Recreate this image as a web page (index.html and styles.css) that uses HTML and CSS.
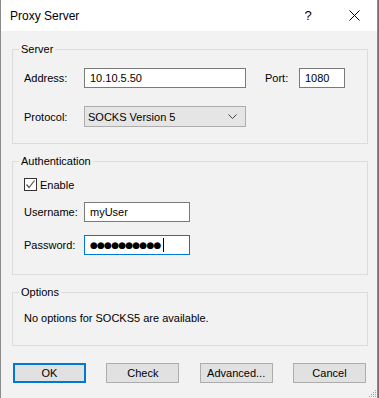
FILE: index.html
```html
<!DOCTYPE html>
<html lang="en">
<head>
    <meta charset="UTF-8">
    <title>Proxy Server</title>
    <link rel="stylesheet" href="styles.css">
</head>
<body>

    <div class="window">
        <div class="titlebar">
            <span class="title">Proxy Server</span>
            <span class="tb-btn tb-help">?</span>
            <span class="tb-btn tb-close">
                <svg width="11" height="11" viewBox="0 0 11 11"><path d="M0.5 0.5 L10.5 10.5 M10.5 0.5 L0.5 10.5" stroke="#000" stroke-width="1"/></svg>
            </span>
        </div>

        <div class="content">
            <fieldset class="group group-server">
                <legend>Server</legend>
                <div class="row">
                    <label class="lbl" for="address">Address:</label>
                    <input class="field field-address" id="address" value="10.10.5.50">
                    <label class="lbl-port" for="port">Port:</label>
                    <input class="field field-port" id="port" value="1080">
                </div>
                <div class="row row-protocol">
                    <label class="lbl">Protocol:</label>
                    <div class="select">
                        <span>SOCKS Version 5</span>
                        <svg width="9" height="5" viewBox="0 0 9 5"><path d="M0.5 0.5 L4.5 4.5 L8.5 0.5" fill="none" stroke="#444" stroke-width="1"/></svg>
                    </div>
                </div>
            </fieldset>

            <fieldset class="group group-auth">
                <legend>Authentication</legend>
                <div class="check-row">
                    <span class="checkbox">
                        <svg width="11" height="11" viewBox="0 0 11 11"><path d="M1.5 5.5 L4 8.5 L9.5 1.5" fill="none" stroke="#555" stroke-width="1.2"/></svg>
                    </span>
                    <span>Enable</span>
                </div>
                <div class="row row-user">
                    <label class="lbl" for="username">Username:</label>
                    <input class="field field-user" id="username" value="myUser">
                </div>
                <div class="row row-pass">
                    <label class="lbl">Password:</label>
                    <div class="field field-user field-focus"><span class="dots">●●●●●●●●●●</span><span class="caret"></span></div>
                </div>
            </fieldset>

            <fieldset class="group group-options">
                <legend>Options</legend>
                <p class="note">No options for SOCKS5 are available.</p>
            </fieldset>

            <div class="buttons">
                <button class="btn btn-default">OK</button>
                <button class="btn">Check</button>
                <button class="btn">Advanced...</button>
                <button class="btn">Cancel</button>
            </div>
        </div>

        <svg class="grip" width="9" height="9" viewBox="0 0 9 9">
            <rect x="7" y="1" width="1" height="1" fill="#a0a0a0"/>
            <rect x="5" y="3" width="1" height="1" fill="#a0a0a0"/>
            <rect x="7" y="3" width="1" height="1" fill="#a0a0a0"/>
            <rect x="3" y="5" width="1" height="1" fill="#a0a0a0"/>
            <rect x="5" y="5" width="1" height="1" fill="#a0a0a0"/>
            <rect x="7" y="5" width="1" height="1" fill="#a0a0a0"/>
            <rect x="1" y="7" width="1" height="1" fill="#a0a0a0"/>
            <rect x="3" y="7" width="1" height="1" fill="#a0a0a0"/>
            <rect x="5" y="7" width="1" height="1" fill="#a0a0a0"/>
            <rect x="7" y="7" width="1" height="1" fill="#a0a0a0"/>
        </svg>
    </div>

</body>
</html>
```

FILE: styles.css
```css
body {
    margin: 0;
    background: #6e6e6e;
    font-family: "Liberation Sans", Arial, sans-serif;
    font-size: 11px;
    color: #000;
}
.window {
    position: relative;
    width: 378px;
    height: 398px;
    box-sizing: border-box;
    border-left: 1px solid #8a8a8a;
    border-right: 1px solid #8a8a8a;
    background: #f2f2f2;
}
.titlebar {
    display: flex;
    align-items: center;
    height: 31px;
    background: #fff;
}
.title {
    flex: 1;
    padding-left: 9px;
    font-size: 12px;
}
.tb-btn {
    display: flex;
    align-items: center;
    justify-content: center;
    width: 46px;
    height: 31px;
}
.tb-help {
    font-size: 13px;
}
.content {
    padding: 0 0 0 11px;
}
.group {
    width: 356px;
    box-sizing: border-box;
    margin: 11px 0 0 0;
    padding: 0 11px;
    border: 1px solid #dcdcdc;
    min-width: 0;
}
.group legend {
    padding: 0 2px;
    margin-left: -5px;
    line-height: 13px;
}
.group-server {
    margin-top: 12px;
    padding-top: 12px;
    padding-bottom: 16px;
}
.group-auth {
    padding-top: 10px;
    padding-bottom: 19px;
}
.group-options {
    padding-top: 13px;
    padding-bottom: 20px;
}
.row {
    display: flex;
    align-items: center;
}
.row-protocol {
    margin-top: 18px;
}
.row-user {
    margin-top: 11px;
}
.row-pass {
    margin-top: 13px;
}
.lbl {
    width: 60px;
}
.lbl-port {
    width: 34px;
    margin-left: 19px;
}
.field {
    height: 20px;
    box-sizing: border-box;
    border: 1px solid #7a7a7a;
    background: #fff;
    padding: 0 5px;
    font-family: inherit;
    font-size: 11px;
    color: #000;
    outline: none;
}
.field-address {
    width: 162px;
}
.field-port {
    width: 46px;
}
.field-user {
    width: 106px;
}
.field-focus {
    display: flex;
    align-items: center;
    border-color: #0078d7;
}
.dots {
    font-family: "DejaVu Sans", sans-serif;
    font-size: 9px;
    letter-spacing: -0.8px;
}
.caret {
    width: 1px;
    height: 14px;
    margin-left: 2px;
    background: #000;
}
.select {
    display: flex;
    align-items: center;
    justify-content: space-between;
    width: 162px;
    height: 21px;
    box-sizing: border-box;
    padding: 0 8px 0 3px;
    border: 1px solid #adadad;
    background: #e5e5e5;
}
.check-row {
    display: flex;
    align-items: center;
    gap: 3px;
    height: 13px;
}
.checkbox {
    display: flex;
    align-items: center;
    justify-content: center;
    width: 13px;
    height: 13px;
    box-sizing: border-box;
    border: 1px solid #333;
    background: #fff;
}
.note {
    margin: 0;
    line-height: 13px;
}
.buttons {
    display: flex;
    justify-content: space-between;
    width: 353px;
    margin: 17px 0 0 1px;
}
.btn {
    width: 73px;
    height: 20px;
    box-sizing: border-box;
    border: 1px solid #adadad;
    background: #e1e1e1;
    font-family: inherit;
    font-size: 11px;
    color: #000;
    padding: 0;
}
.btn-default {
    border: 2px solid #0078d7;
}
.grip {
    position: absolute;
    right: 0;
    bottom: 0;
}
```
